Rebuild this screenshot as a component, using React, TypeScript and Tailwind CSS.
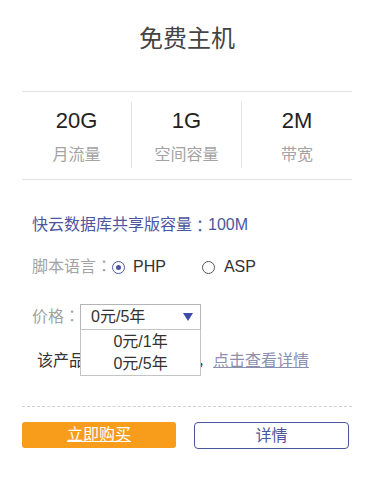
const font = { fontFamily: '"Liberation Sans", "Noto Sans CJK SC", sans-serif' };

const stats = [
  { value: "20G", label: "月流量" },
  { value: "1G", label: "空间容量" },
  { value: "2M", label: "带宽" },
];

// fullwidth colon, centred like the reference
function Colon() {
  return <span className="font-['Noto_Sans_CJK_TC',sans-serif] leading-none">：</span>;
}

function Radio({ checked }: { checked?: boolean }) {
  return (
    <span
      className={
        "flex h-[13px] w-[13px] items-center justify-center rounded-full border " +
        (checked ? "border-[#4c56a0]" : "border-[#555]")
      }
    >
      {checked && <span className="h-[5px] w-[5px] rounded-full bg-[#4c56a0]" />}
    </span>
  );
}

export default function App() {
  return (
    <div className="min-h-[477px] w-[376px] bg-white" style={font}>
      <div className="mx-[22px] w-[330px]">
        <div className="h-[92px] border-b border-[#e3e3e3] pt-[23px] text-center text-[24px] leading-[32px] text-[#444]">
          免费主机
        </div>

        <div className="grid grid-cols-3 border-b border-[#e3e3e3] pt-[10px] pb-[11px]">
          {stats.map((s, i) => (
            <div
              key={i}
              className={"h-[66px] pt-[5px] text-center " + (i < 2 ? "border-r border-[#e3e3e3]" : "")}
            >
              <div className="text-[22px] leading-[28px] text-[#222]">{s.value}</div>
              <div className="mt-[9px] text-[16px] leading-[22px] text-[#a3a3a3]">{s.label}</div>
            </div>
          ))}
        </div>

        <div className="mt-[33px] flex h-[24px] items-center pl-[10px] text-[16px] text-[#4c56a0]">
          <span>快云数据库共享版容量</span>
          <Colon />
          <span>100M</span>
        </div>

        <div className="mt-[18px] flex h-[24px] items-center pl-[10px] text-[16px]">
          <span className="text-[#a3a3a3]">脚本语言</span>
          <span className="text-[#a3a3a3]">
            <Colon />
          </span>
          <Radio checked />
          <span className="ml-[8px] text-[#333]">PHP</span>
          <span className="ml-[36px]">
            <Radio />
          </span>
          <span className="ml-[9px] text-[#333]">ASP</span>
        </div>

        <div className="relative mt-[25px] flex h-[26px] items-center pl-[10px] text-[16px]">
          <span className="text-[#a3a3a3]">价格</span>
          <span className="text-[#a3a3a3]">
            <Colon />
          </span>
          <div className="relative flex h-[26px] w-[121px] items-center justify-between border border-[#b5b5b5] pl-[10px] pr-[7px] text-[#333]">
            <span className="leading-[24px]">0元/5年</span>
            <svg width="10" height="8" viewBox="0 0 10 8">
              <path d="M0 0 H10 L5 8 Z" fill="#3d4aa8" />
            </svg>
            <div className="absolute left-[-1px] top-[24px] z-10 w-[121px] border border-[#c4c4c4] bg-white pt-[1px] text-center text-[#333]">
              <div className="h-[22px] leading-[22px]">0元/1年</div>
              <div className="h-[22px] leading-[22px]">0元/5年</div>
            </div>
          </div>
        </div>

        <div className="mt-[19px] flex h-[24px] items-center pl-[15px] text-[16px] text-[#333]">
          <span>该产品</span>
          <span className="inline-block w-[112px]" />
          <span>，</span>
          <a href="#" className="text-[#8b90b0] underline">
            点击查看详情
          </a>
        </div>

        <div className="mt-[33px] border-t border-dashed border-[#d0d0d0]" />

        <div className="mt-[15px] flex gap-[18px] text-[16px]">
          <a
            href="#"
            className="flex h-[26px] w-[154px] items-center justify-center rounded-[3px] bg-[#f89c1c] text-white underline"
          >
            立即购买
          </a>
          <a
            href="#"
            className="flex h-[27px] w-[155px] items-center justify-center rounded-[4px] border border-[#4c56a0] text-[#4c56a0]"
          >
            详情
          </a>
        </div>
      </div>
    </div>
  );
}
